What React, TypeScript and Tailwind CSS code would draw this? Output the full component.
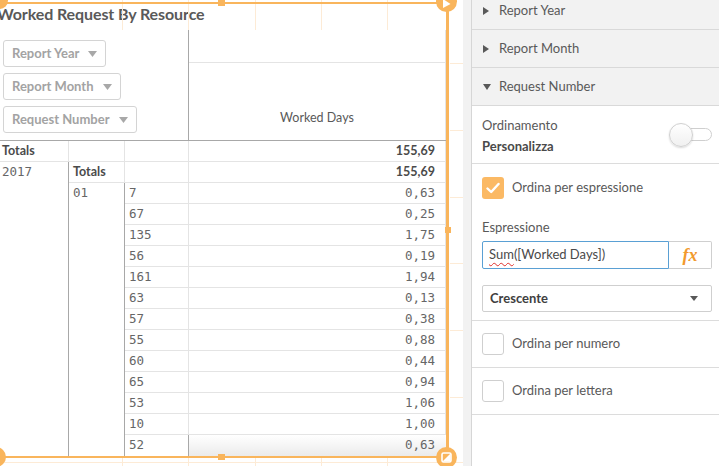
import React from "react";

const rows: [string, string][] = [
  ["7", "0,63"],
  ["67", "0,25"],
  ["135", "1,75"],
  ["56", "0,19"],
  ["161", "1,94"],
  ["63", "0,13"],
  ["57", "0,38"],
  ["55", "0,88"],
  ["60", "0,44"],
  ["65", "0,94"],
  ["53", "1,06"],
  ["10", "1,00"],
  ["52", "0,63"],
];

const sans = "font-['Lato','Open_Sans',sans-serif]";
const mono = "font-['DejaVu_Sans_Mono','Liberation_Mono',monospace]";

function Caret({ className = "" }: { className?: string }) {
  return (
    <svg width="9" height="6" viewBox="0 0 9 6" className={className}>
      <path d="M0 0 L9 0 L4.5 6 Z" fill="currentColor" />
    </svg>
  );
}

function FilterButton({ label }: { label: string }) {
  return (
    <div className="flex h-[27px] w-fit items-center gap-[9px] rounded-[3px] border border-[#d4d4d4] pl-[8px] pr-[8px] text-[13px] font-bold text-[#a3a3a3]">
      <span>{label}</span>
      <Caret className="text-[#a8a8a8]" />
    </div>
  );
}

function Checkbox({ checked }: { checked?: boolean }) {
  if (checked) {
    return (
      <div className="flex h-[22px] w-[22px] items-center justify-center rounded-[3px] bg-[#fbb964]">
        <svg width="14" height="12" viewBox="0 0 14 12">
          <path d="M1.5 6.5 L5.2 10 L12.5 2" fill="none" stroke="white" strokeWidth="2.4" strokeLinecap="round" strokeLinejoin="round" />
        </svg>
      </div>
    );
  }
  return <div className="h-[22px] w-[22px] rounded-[3px] border border-[#cfcfcf] bg-white" />;
}

function PivotTable() {
  const cell = "border-b border-[#e4e4e4] flex items-center";
  const sep = "border-r border-[#a8a8a8]";
  return (
    <div className={`w-[446px] ${sans}`}>
      {/* header */}
      <div className="flex h-[111px] border-b border-[#a8a8a8]">
        <div className="flex w-[188px] flex-col gap-[6px] pl-[3px] pt-[10px]">
          <FilterButton label="Report Year" />
          <FilterButton label="Report Month" />
          <FilterButton label="Request Number" />
        </div>
        <div className="flex flex-1 flex-col border-l border-r border-l-[#a8a8a8] border-r-[#e4e4e4]">
          <div className="h-[33px] border-b border-[#e4e4e4]" />
          <div className="flex flex-1 items-end justify-center pb-[12px] text-[12.5px] text-[#595959]">
            Worked Days
          </div>
        </div>
      </div>
      {/* body */}
      <div className="grid grid-cols-[69px_56px_64px_257px] auto-rows-[21px] border-r border-[#e4e4e4] text-[12.5px] text-[#666666]">
        <div className={`${cell} ${sep} pl-[2px] font-bold text-[#4a4a4a]`}>Totals</div>
        <div className={`${cell} ${sep}`} />
        <div className={`${cell} ${sep}`} />
        <div className={`${cell} justify-end pr-[11px] font-bold text-[#4a4a4a]`}>155,69</div>

        <div className={`row-span-14 ${sep} ${mono} pl-[2px] pt-[1px]`}>2017</div>
        <div className={`${cell} ${sep} pl-[4px] font-bold text-[#4a4a4a]`}>Totals</div>
        <div className={`${cell} ${sep}`} />
        <div className={`${cell} justify-end pr-[11px] font-bold text-[#4a4a4a]`}>155,69</div>

        <div className={`row-span-13 ${sep} ${mono} pl-[4px] pt-[1px]`}>01</div>
        {rows.map(([n, v], i) => {
          const last = i === rows.length - 1;
          return (
            <React.Fragment key={i}>
              <div className={`${last ? "flex items-center" : cell} ${sep} ${mono} pl-[4px]`}>{n}</div>
              <div
                className={`${last ? "flex items-center bg-gradient-to-b from-white to-[#ebebeb]" : cell} ${mono} justify-end pr-[11px]`}
              >
                {v}
              </div>
            </React.Fragment>
          );
        })}
      </div>
    </div>
  );
}

function SelectionFrame() {
  const o = "bg-[#f9b55c]";
  return (
    <div className="pointer-events-none absolute inset-0">
      {/* faint snap grid */}
      {[122, 188, 255, 321, 387].map((x) => (
        <React.Fragment key={x}>
          <div className="absolute top-0 h-[30px] w-px bg-[#fdebd6]" style={{ left: x }} />
          <div className="absolute top-[458px] h-[8px] w-px bg-[#fdebd6]" style={{ left: x }} />
        </React.Fragment>
      ))}
      {[63, 130, 197, 263, 330, 397].map((y) => (
        <div key={y} className="absolute left-[450px] h-px w-[13px] bg-[#fdebd6]" style={{ top: y }} />
      ))}
      <div className="absolute left-0 top-[462px] h-px w-[463px] bg-[#fdebd6]" />

      {/* frame lines */}
      <div className={`absolute left-0 top-[2px] h-[2px] w-[447px] ${o}`} />
      <div className={`absolute left-0 top-[456px] h-[2px] w-[447px] ${o}`} />
      <div className={`absolute left-[446px] top-[2px] h-[456px] w-[3px] ${o}`} />

      {/* handles */}
      <div className={`absolute left-[218px] top-0 h-[6px] w-[7px] ${o}`} />
      <div className={`absolute left-[218px] top-[454px] h-[6px] w-[7px] ${o}`} />
      <div className={`absolute left-[445px] top-[227px] h-[6px] w-[6px] ${o}`} />

      {/* corner circles */}
      <div className={`absolute -left-[9px] -top-[8px] h-[17px] w-[17px] rounded-full ${o}`} />
      <div className={`absolute -left-[14px] top-[447px] h-[20px] w-[20px] rounded-full ${o}`} />
      <div className={`absolute left-[436px] -top-[9px] flex h-[21px] w-[21px] items-end justify-center rounded-full pb-[4px] ${o}`}>
        <svg width="9" height="9" viewBox="0 0 9 9">
          <path d="M1 0 L8.5 5 L1 9 Z" fill="white" />
        </svg>
      </div>
      <div className={`absolute left-[436px] top-[447px] flex h-[21px] w-[21px] items-center justify-center rounded-full ${o}`}>
        <svg width="11" height="11" viewBox="0 0 11 11">
          <rect x="1" y="1" width="9" height="9" rx="1.5" fill="none" stroke="white" strokeWidth="1.6" />
          <path d="M1.5 9.5 L9.5 1.5 L9.5 9.5 Z" fill="white" />
        </svg>
      </div>
    </div>
  );
}

function PropRow({ label, open, first }: { label: string; open?: boolean; first?: boolean }) {
  return (
    <div
      className={`flex h-[38px] items-center border-b border-[#d9d9d9] bg-[#f2f2f2] pl-[11px] text-[13px] text-[#595959] ${first ? "-mt-[8px]" : ""}`}
    >
      <span className="flex w-[16px] items-center">
        {open ? (
          <svg width="8" height="6" viewBox="0 0 8 6">
            <path d="M0 0 L8 0 L4 6 Z" fill="#595959" />
          </svg>
        ) : (
          <svg width="6" height="8" viewBox="0 0 6 8">
            <path d="M0 0 L6 4 L0 8 Z" fill="#595959" />
          </svg>
        )}
      </span>
      {label}
    </div>
  );
}

function PropertyPanel() {
  return (
    <div className={`flex h-full flex-1 ${sans}`}>
      <div className="w-[9px] border-r border-[#d6d6d6] bg-[#f2f2f2]" />
      <div className="flex flex-1 flex-col overflow-hidden bg-white">
        <PropRow label="Report Year" first />
        <PropRow label="Report Month" />
        <PropRow label="Request Number" open />

        <div className="flex h-[58px] items-center justify-between border-b border-[#dcdcdc] pl-[10px] pr-[7px]">
          <div className="flex flex-col gap-[5px] pt-[2px]">
            <span className="text-[13px] leading-[16px] text-[#595959]">Ordinamento</span>
            <span className="text-[13px] font-bold leading-[16px] text-[#4a4a4a]">Personalizza</span>
          </div>
          <div className="relative flex h-[24px] w-[43px] items-center">
            <div className="ml-[6px] h-[13px] w-[37px] rounded-full border border-[#cfcfcf] bg-white" />
            <div className="absolute left-0 top-0 h-[24px] w-[24px] rounded-full border border-[#d0d0d0] bg-gradient-to-b from-white to-[#f0f0f0] shadow-[0_1px_2px_rgba(0,0,0,0.15)]" />
          </div>
        </div>

        <div className="flex h-[157px] flex-col border-b border-[#dcdcdc] pl-[10px] pr-[7px] pt-[13px]">
          <div className="flex items-center gap-[8px] text-[13px] text-[#595959]">
            <Checkbox checked />
            <span>Ordina per espressione</span>
          </div>
          <div className="mt-[20px] text-[13px] leading-[16px] text-[#595959]">Espressione</div>
          <div className="mt-[6px] flex h-[28px]">
            <div className="flex w-[187px] items-center rounded-l-[2px] border-[1.5px] border-[#5aa0d4] pl-[6px] text-[13px] text-[#4a4a4a]">
              <span className="underline decoration-[#e0302b] decoration-wavy decoration-1 underline-offset-[3px]">Sum</span>
              <span>([Worked Days])</span>
            </div>
            <div className="flex flex-1 items-center justify-center rounded-r-[2px] border border-l-0 border-[#cfcfcf]">
              <span className="font-['Liberation_Serif',serif] text-[18px] font-bold italic text-[#f29a2e]">fx</span>
            </div>
          </div>
          <div className="mt-[16px] flex h-[27px] items-center justify-between rounded-[2px] border border-[#cfcfcf] pl-[7px] pr-[13px] text-[13px] font-bold text-[#404040]">
            <span>Crescente</span>
            <svg width="8" height="5" viewBox="0 0 8 5">
              <path d="M0 0 L8 0 L4 5 Z" fill="#595959" />
            </svg>
          </div>
        </div>

        <div className="flex h-[47px] items-center gap-[8px] border-b border-[#dcdcdc] pl-[10px] text-[13px] text-[#595959]">
          <Checkbox />
          <span>Ordina per numero</span>
        </div>
        <div className="flex h-[47px] items-center gap-[8px] border-b border-[#dcdcdc] pl-[10px] text-[13px] text-[#595959]">
          <Checkbox />
          <span>Ordina per lettera</span>
        </div>
      </div>
    </div>
  );
}

export default function App() {
  return (
    <div className="flex h-[466px] w-[719px] overflow-hidden bg-white">
      <div className={`relative h-full w-[463px] shrink-0 ${sans}`}>
        <div className="flex h-[30px] items-center pb-[2px]">
          <span className="-ml-[3px] text-[16px] font-bold tracking-[-0.1px] text-[#595959]">Worked Request By Resource</span>
        </div>
        <PivotTable />
        <SelectionFrame />
      </div>
      <PropertyPanel />
    </div>
  );
}
